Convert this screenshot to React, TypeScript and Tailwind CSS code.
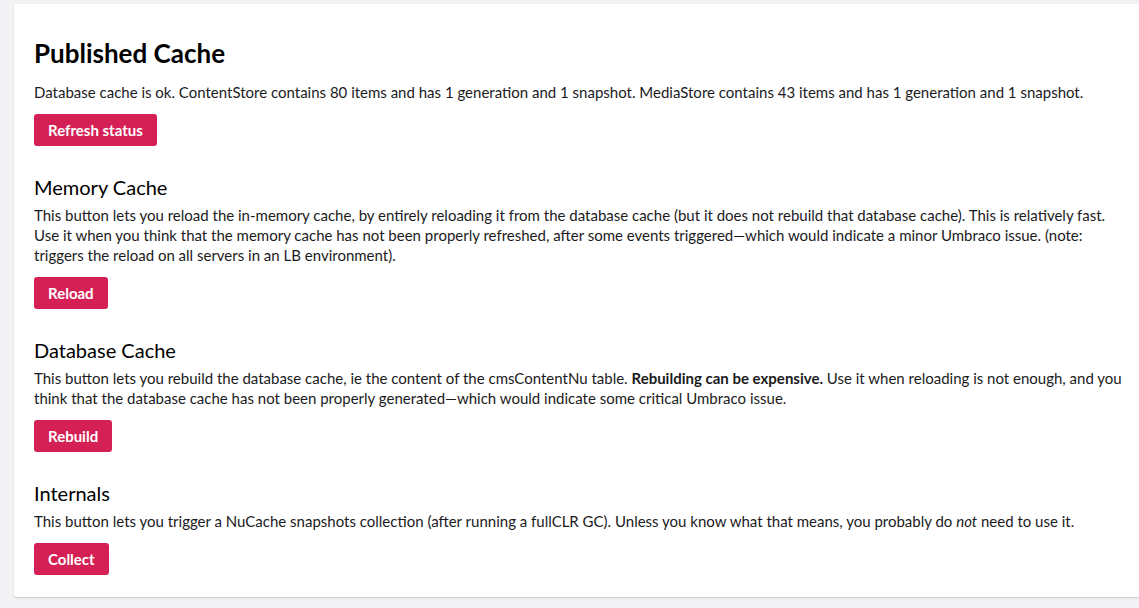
const sections = [
  {
    title: 'Memory Cache',
    button: 'Reload',
    body: (
      <>
        This button lets you reload the in-memory cache, by entirely reloading it from the database cache (but it does not rebuild that database cache). This is relatively fast. Use it when you think that the memory cache has not been properly refreshed, after some events triggered—which would indicate a minor Umbraco issue. (note: triggers the reload on all servers in an LB environment).
      </>
    ),
  },
  {
    title: 'Database Cache',
    button: 'Rebuild',
    body: (
      <>
        This button lets you rebuild the database cache, ie the content of the cmsContentNu table. <b>Rebuilding can be expensive.</b> Use it when reloading is not enough, and you think that the database cache has not been properly generated—which would indicate some critical Umbraco issue.
      </>
    ),
  },
  {
    title: 'Internals',
    button: 'Collect',
    body: (
      <>
        This button lets you trigger a NuCache snapshots collection (after running a fullCLR GC). Unless you know what that means, you probably do <i>not</i> need to use it.
      </>
    ),
  },
];

function Btn({ label }: { label: string }) {
  return (
    <button
      type="button"
      className="mt-3 rounded-[3px] bg-[#d42054] px-[14px] py-1.5 text-[15px] font-bold leading-5 text-white"
    >
      {label}
    </button>
  );
}

export default function App() {
  return (
    <div className="min-h-[608px] bg-[#f3f3f5] pl-[14px] pt-1 font-['Lato','Liberation_Sans',sans-serif] text-[#1b1b1d]">
      <div className="h-[593px] rounded-l-[3px] bg-white pl-5 pr-3 pt-[34px] shadow-[0_1px_2px_rgba(0,0,0,0.18)]">
        <h1 className="text-[26px] font-bold leading-[30px] text-black">Published Cache</h1>
        <p className="mt-[14px] text-[15px] leading-5">
          Database cache is ok. ContentStore contains 80 items and has 1 generation and 1 snapshot. MediaStore contains 43 items and has 1 generation and 1 snapshot.
        </p>
        <Btn label="Refresh status" />

        {sections.map((s) => (
          <div key={s.title} className="mt-[29px]">
            <h2 className="text-[20px] leading-6 text-black">{s.title}</h2>
            <p className="mt-[6px] text-[15px] leading-5">{s.body}</p>
            <Btn label={s.button} />
          </div>
        ))}
      </div>
    </div>
  );
}
